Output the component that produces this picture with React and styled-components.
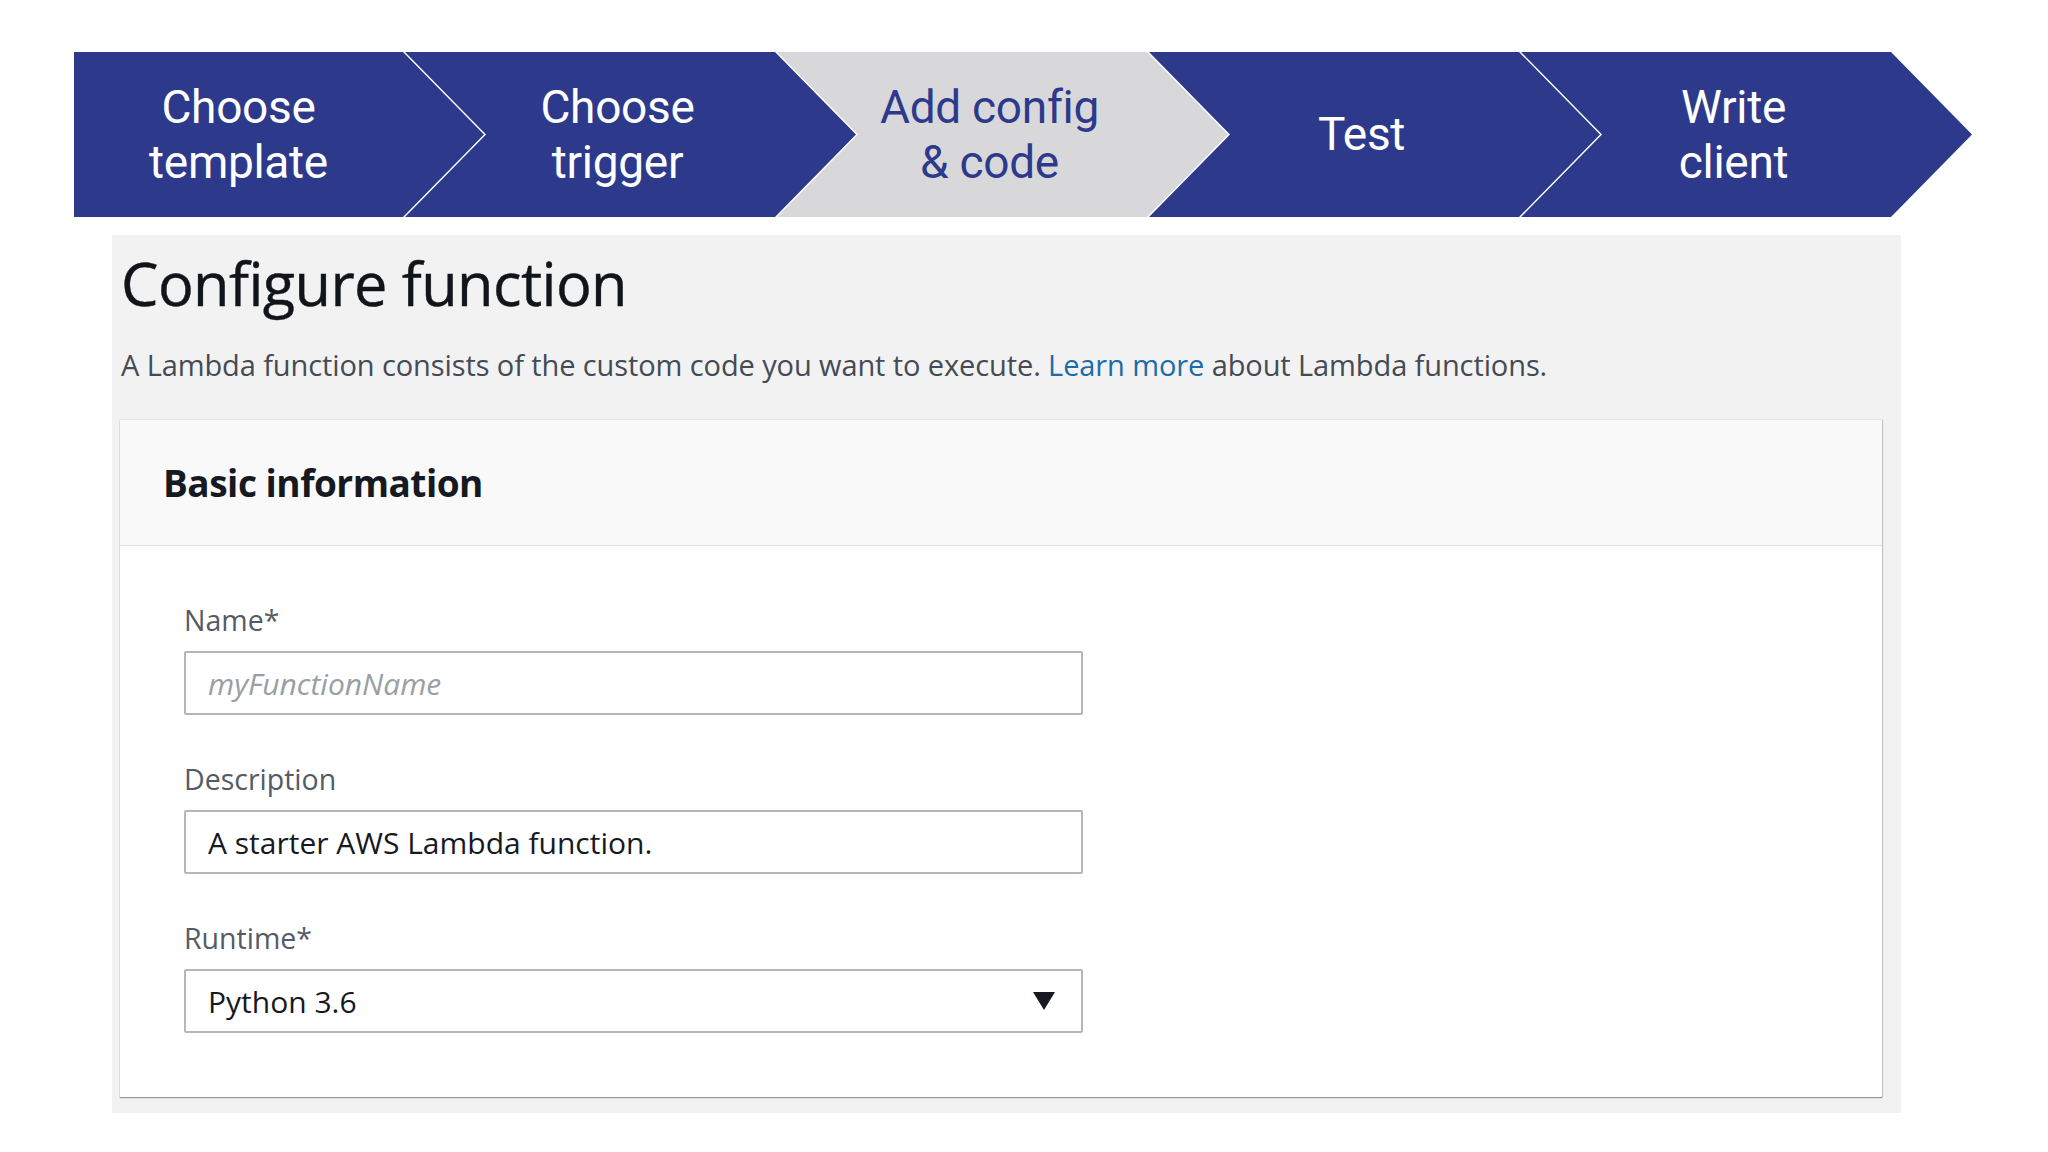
import React from "react";
import styled, { createGlobalStyle } from "styled-components";

const Global = createGlobalStyle`
  html, body { margin: 0; padding: 0; background: #ffffff; }
  body { font-family: "Open Sans", "Liberation Sans", sans-serif; }
  * { box-sizing: border-box; }
`;

const Page = styled.div`
  width: 2048px;
  height: 1152px;
  background: #ffffff;
  padding-top: 52px;
  overflow: hidden;
`;

const Stepper = styled.div`
  display: flex;
  margin-left: 74px;
  height: 165px;
`;

const POINT = 81;

const Step = styled.div`
  flex: 0 0 ${(p) => (p.$first ? 410 : 451)}px;
  height: 100%;
  margin-left: ${(p) => (p.$first ? 0 : -POINT + 2)}px;
  background: ${(p) => (p.$active ? "#d8d8da" : "#2d3a8c")};
  color: ${(p) => (p.$active ? "#2d3a8c" : "#ffffff")};
  clip-path: ${(p) =>
    p.$first
      ? `polygon(0 0, calc(100% - ${POINT}px) 0, 100% 50%, calc(100% - ${POINT}px) 100%, 0 100%)`
      : `polygon(0 0, calc(100% - ${POINT}px) 0, 100% 50%, calc(100% - ${POINT}px) 100%, 0 100%, ${POINT}px 50%)`};
  display: flex;
  align-items: center;
  justify-content: center;
  padding-left: ${(p) => (p.$first ? 0 : 55)}px;
  padding-right: ${POINT}px;
  font-family: Roboto, "Liberation Sans", sans-serif;
  font-size: 46px;
  line-height: 55px;
  text-align: center;
  letter-spacing: -0.3px;
`;

const Panel = styled.div`
  margin-top: 18px;
  margin-left: 112px;
  width: 1789px;
  height: 878px;
  background: #f2f2f3;
  padding: 0 19px 0 8px;
`;

const Title = styled.h1`
  margin: 0;
  padding: 8px 0 0 1px;
  font-family: "Open Sans", "Liberation Sans", sans-serif;
  font-weight: 400;
  font-size: 59.5px;
  line-height: 80px;
  color: #111419;
  letter-spacing: -0.6px;
  -webkit-text-stroke: 0.4px #111419;
`;

const Intro = styled.p`
  margin: 22px 0 0 1px;
  font-size: 29px;
  line-height: 40px;
  color: #444b55;
  letter-spacing: -0.1px;
`;

const Link = styled.a`
  color: #1b6ca8;
  text-decoration: none;
`;

const Card = styled.section`
  margin-top: 35px;
  background: #ffffff;
  box-shadow: 0 1px 1px rgba(0, 0, 0, 0.35), 1px 0 1px rgba(0, 0, 0, 0.12), 0 0 0 1px #e9e9ea;
`;

const CardHeader = styled.div`
  height: 126px;
  background: #f9f9fa;
  border-bottom: 1px solid #e2e2e4;
  display: flex;
  align-items: center;
  padding-left: 43px;
  font-size: 37px;
  font-weight: 700;
  color: #16191f;
  letter-spacing: -0.5px;
`;

const CardBody = styled.div`
  padding: 57px 0 64px 64px;
  display: flex;
  flex-direction: column;
`;

const Field = styled.div`
  display: flex;
  flex-direction: column;
  & + & {
    margin-top: 47px;
  }
`;

const Label = styled.label`
  font-size: 28.5px;
  line-height: 34px;
  color: #545b64;
  margin-bottom: 14px;
`;

const Box = styled.div`
  width: 899px;
  height: 64px;
  border: 2px solid #b4b6ba;
  border-radius: 2px;
  display: flex;
  align-items: center;
  justify-content: space-between;
  padding: 0 26px 0 22px;
  font-size: 30px;
  color: ${(p) => (p.$placeholder ? "#9a9ea5" : "#16191f")};
  font-style: ${(p) => (p.$placeholder ? "italic" : "normal")};
  background: #ffffff;
`;

const Arrow = styled.svg`
  width: 22px;
  height: 18px;
  display: block;
`;

const steps = [
  { label: ["Choose", "template"] },
  { label: ["Choose", "trigger"] },
  { label: ["Add config", "& code"], active: true },
  { label: ["Test"] },
  { label: ["Write", "client"] },
];

export default function App() {
  return (
    <>
      <Global />
      <Page>
        <Stepper>
          {steps.map((s, i) => (
            <Step key={i} $first={i === 0} $active={s.active}>
              <div>
                {s.label.map((l, j) => (
                  <div key={j}>{l}</div>
                ))}
              </div>
            </Step>
          ))}
        </Stepper>
        <Panel>
          <Title>Configure function</Title>
          <Intro>
            A Lambda function consists of the custom code you want to execute.{" "}
            <Link href="#">Learn more</Link> about Lambda functions.
          </Intro>
          <Card>
            <CardHeader>Basic information</CardHeader>
            <CardBody>
              <Field>
                <Label>Name*</Label>
                <Box $placeholder>myFunctionName</Box>
              </Field>
              <Field>
                <Label>Description</Label>
                <Box>A starter AWS Lambda function.</Box>
              </Field>
              <Field>
                <Label>Runtime*</Label>
                <Box>
                  <span>Python 3.6</span>
                  <Arrow viewBox="0 0 22 18">
                    <polygon points="0,0 22,0 11,18" fill="#16191f" />
                  </Arrow>
                </Box>
              </Field>
            </CardBody>
          </Card>
        </Panel>
      </Page>
    </>
  );
}
